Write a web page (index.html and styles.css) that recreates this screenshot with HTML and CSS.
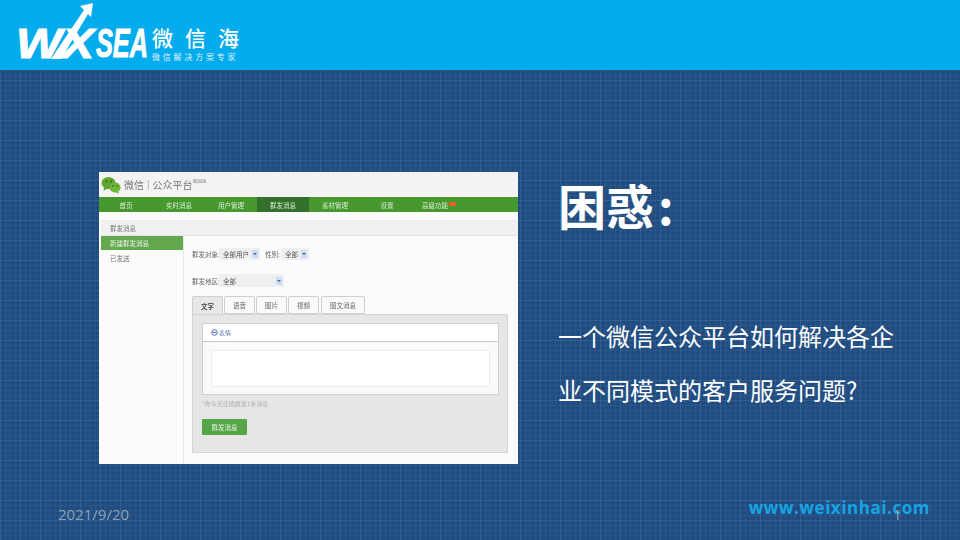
FILE: index.html
```html
<!DOCTYPE html>
<html lang="zh-CN">
<head>
<meta charset="utf-8">
<title>困惑</title>
<link rel="stylesheet" href="styles.css">
</head>
<body>
<div class="slide">
  <header class="header">
    <svg class="logo-mark" width="135" height="70" viewBox="0 0 135 70">
      <text class="mark-wx" x="1" y="58" textLength="78" lengthAdjust="spacingAndGlyphs">WX</text>
      <text class="mark-sea" x="81" y="57" textLength="52" lengthAdjust="spacingAndGlyphs">SEA</text>
      <polygon fill="#fff" points="78,3 65,6 69,10 36,59 46,59 73,14 76,17"/>
    </svg>
    <div class="brand">
      <div class="brand-name">微信海</div>
      <div class="brand-sub">微信解决方案专家</div>
    </div>
  </header>

  <main class="main">
    <section class="shot">
      <div class="shot-top">
        <svg width="20" height="18" viewBox="0 0 20 18">
          <ellipse cx="7.5" cy="7" rx="7" ry="6" fill="#5fa62f"/>
          <polygon points="3,11 2.5,15 7,12" fill="#5fa62f"/>
          <ellipse cx="14" cy="11.5" rx="5.6" ry="5" fill="#6fb53a"/>
          <polygon points="17,15 18,17.6 14,16" fill="#6fb53a"/>
          <circle cx="5" cy="5.5" r="1" fill="#2f6a16"/>
          <circle cx="10" cy="5.5" r="1" fill="#2f6a16"/>
          <circle cx="12" cy="10" r=".8" fill="#2f6a16"/>
          <circle cx="16" cy="10" r=".8" fill="#2f6a16"/>
        </svg>
        <span class="shot-brand">微信</span>
        <span class="shot-sep">|</span>
        <span class="shot-brand">公众平台</span>
        <span class="shot-badge">BETA</span>
      </div>
      <nav class="nav">
        <span class="nav-item nav-first">首页</span>
        <span class="nav-item">实时消息</span>
        <span class="nav-item">用户管理</span>
        <span class="nav-item nav-active">群发消息</span>
        <span class="nav-item">素材管理</span>
        <span class="nav-item">设置</span>
        <span class="nav-item">高级功能<i class="nav-new"></i></span>
      </nav>
      <div class="panel">
        <div class="panel-title">群发消息</div>
        <div class="panel-body">
          <aside class="side">
            <div class="side-item side-active">新建群发消息</div>
            <div class="side-item">已发送</div>
          </aside>
          <div class="content">
            <div class="form-row row-first">
              <span class="label">群发对象:</span>
              <span class="select sel-user">全部用户<i class="sel-arrow"></i></span>
              <span class="label label-gender">性别:</span>
              <span class="select sel-gender">全部<i class="sel-arrow"></i></span>
            </div>
            <div class="form-row row-second">
              <span class="label">群发地区:</span>
              <span class="select sel-area">全部<i class="sel-arrow"></i></span>
            </div>
            <div class="tabs">
              <span class="tab tab-active">文字</span>
              <span class="tab">语音</span>
              <span class="tab">图片</span>
              <span class="tab">视频</span>
              <span class="tab tab-wide">图文消息</span>
            </div>
            <div class="tab-panel">
              <div class="editor">
                <div class="editor-bar">
                  <svg width="7" height="7" viewBox="0 0 7 7"><circle cx="3.5" cy="3.5" r="2.8" fill="none" stroke="#4a6fb5" stroke-width="1"/><path d="M1.6 3.5h3.8" stroke="#4a6fb5" stroke-width=".9"/></svg>
                  <span>表情</span>
                </div>
                <div class="editor-body"><div class="textarea"></div></div>
              </div>
              <div class="hint">*你今天还能群发1条消息</div>
              <div class="send">群发消息</div>
            </div>
          </div>
        </div>
      </div>
    </section>
    <section class="copy">
      <h1 class="title">困惑<span class="title-colon">:</span></h1>
      <p class="desc">一个微信公众平台如何解决各企业不同模式的客户服务问题?</p>
    </section>
  </main>

  <footer class="footer">
    <span class="date">2021/9/20</span>
    <span class="site">www.weixinhai.com</span>
    <span class="page-no">1</span>
  </footer>
</div>
</body>
</html>
```

FILE: styles.css
```css
* { box-sizing: border-box; }
html, body { margin: 0; padding: 0; }
body { font-family: "Noto Sans CJK SC", "Liberation Sans", sans-serif; }

.slide {
  width: 960px;
  height: 540px;
  overflow: hidden;
  display: flex;
  flex-direction: column;
  background-color: #204c80;
  background-image:
    linear-gradient(to right, rgba(120,160,205,.12) 1px, transparent 1px),
    linear-gradient(to bottom, rgba(120,160,205,.12) 1px, transparent 1px),
    linear-gradient(to right, rgba(120,160,205,.1) 1px, transparent 1px),
    linear-gradient(to bottom, rgba(120,160,205,.1) 1px, transparent 1px);
  background-size: 20px 20px, 20px 20px, 5px 5px, 5px 5px;
}

/* header */
.header {
  height: 70px;
  flex: none;
  background: #05aced;
  display: flex;
  align-items: flex-start;
  padding: 0 0 0 15px;
}
.logo-mark { flex: none; overflow: visible; }
.mark-wx, .mark-sea {
  font-family: "Liberation Sans", sans-serif;
  font-weight: 700;
  font-style: italic;
  fill: #fff;
  stroke: #fff;
  stroke-width: 1px;
}
.mark-wx { font-size: 42px; }
.mark-sea { font-size: 41px; }
.brand { color: #fff; padding: 24px 0 0 2px; }
.brand-name {
  font-size: 21px;
  line-height: 27px;
  letter-spacing: 12px;
  font-weight: 500;
  white-space: nowrap;
}
.brand-sub {
  font-size: 8px;
  line-height: 11px;
  letter-spacing: 2.8px;
  white-space: nowrap;
  color: #dff4fd;
}

/* main */
.main {
  flex: 1;
  display: flex;
  align-items: flex-start;
  padding: 102px 0 0 99px;
}

/* screenshot */
.shot {
  width: 419px;
  height: 292px;
  flex: none;
  background: #fbfbfb;
  display: flex;
  flex-direction: column;
  font-size: 6.5px;
  line-height: 8px;
  color: #777;
  filter: blur(.4px);
}
.shot-top {
  height: 25px;
  flex: none;
  background: #f3f3f3;
  display: flex;
  align-items: center;
  padding-left: 2px;
  gap: 3px;
}
.shot-brand { font-size: 10px; color: #777; line-height: 14px; }
.shot-sep { font-size: 9px; color: #999; line-height: 14px; }
.shot-badge {
  font-size: 3.5px;
  line-height: 4px;
  width: 13px;
  text-align: center;
  margin: -7px 0 0 -2px;
  background: #bbb;
  color: #eee;
}
.nav {
  height: 15px;
  flex: none;
  display: flex;
  background: #46982f;
  color: #d8ecd0;
}
.nav-item {
  width: 52px;
  display: flex;
  align-items: center;
  justify-content: center;
}
.nav-first { width: 54px; }
.nav-active { background: #33702b; }
.nav-new {
  width: 7px;
  height: 4px;
  margin: -2px 0 0 1px;
  border-radius: 1px;
  background: #e8622a;
}
.panel {
  flex: 1;
  margin: 8px 0 0 2px;
  display: flex;
  flex-direction: column;
  min-height: 0;
}
.panel-title {
  height: 16px;
  flex: none;
  padding: 0 0 0 9px;
  display: flex;
  align-items: center;
  background: #f1f1f1;
  border-top: 1px solid #ececec;
  border-bottom: 1px solid #e2e2e2;
}
.panel-body { flex: 1; display: flex; min-height: 0; }
.side {
  width: 83px;
  flex: none;
  border-right: 1px solid #e6e6e6;
  display: flex;
  flex-direction: column;
}
.side-item {
  height: 14px;
  display: flex;
  align-items: center;
  padding-left: 9px;
  margin-bottom: 1px;
}
.side-active { background: #62a84e; color: #e6f3e0; }
.content { flex: 1; padding: 12px 10px 10px 8px; }
.form-row { display: flex; align-items: center; height: 12px; }
.row-second { margin-top: 14px; height: 13px; }
.label { width: 27px; flex: none; white-space: nowrap; color: #666; }
.label-gender { width: 16px; margin-left: 5px; }
.select {
  height: 100%;
  display: flex;
  align-items: center;
  justify-content: space-between;
  padding: 0 2px 0 4px;
  background: #efefef;
  color: #555;
  white-space: nowrap;
}
.sel-user { width: 41px; }
.sel-gender { width: 28px; }
.sel-area { width: 65px; }
.sel-arrow {
  width: 6px;
  height: 8px;
  background: #cfdcf5;
  position: relative;
}
.sel-arrow::after {
  content: "";
  position: absolute;
  left: 1px;
  top: 3px;
  border: 2px solid transparent;
  border-top: 2px solid #3f5f9f;
}
.tabs { display: flex; gap: 1px; margin-top: 9px; height: 18px; }
.tab {
  width: 31px;
  height: 18px;
  display: flex;
  align-items: center;
  justify-content: center;
  background: #fafafa;
  border: 1px solid #cfcfcf;
  border-radius: 2px 2px 0 0;
  color: #666;
}
.tab-active {
  background: #e8e8e8;
  border-bottom: none;
  font-weight: 700;
  color: #444;
}
.tab-wide { width: 44px; margin-left: 1px; }
.tab-panel {
  height: 139px;
  background: #e6e6e6;
  border: 1px solid #d4d4d4;
  padding: 8px 8px 0 9px;
}
.editor { height: 72px; display: flex; flex-direction: column; border: 1px solid #cfcfcf; background: #f9f9f9; }
.editor-bar {
  height: 18px;
  flex: none;
  background: #fff;
  border-bottom: 1px solid #c6c6c6;
  display: flex;
  align-items: center;
  gap: 1px;
  padding-left: 8px;
  color: #5472b0;
  font-size: 6px;
}
.editor-body { flex: 1; padding: 8px 8px 7px 8px; }
.textarea { height: 100%; background: #fff; border: 1px solid #ececec; }
.hint { margin-top: 5px; color: #b0b0b0; font-size: 6px; line-height: 8px; white-space: nowrap; }
.send {
  width: 45px;
  height: 16px;
  margin-top: 11px;
  display: flex;
  align-items: center;
  justify-content: center;
  background: #56a546;
  border-radius: 1px;
  color: #e9f5e5;
}

/* right copy */
.copy { width: 340px; margin-left: 40px; color: #fff; }
.title {
  margin: 0;
  font-size: 48px;
  line-height: 64px;
  font-weight: 700;
  white-space: nowrap;
}
.title-colon { margin-left: 4px; }
.desc {
  margin: 73px 0 0;
  font-size: 24px;
  line-height: 54px;
  font-weight: 400;
  width: 338px;
}

/* footer */
.footer {
  position: relative;
  height: 50px;
  flex: none;
  display: flex;
  justify-content: space-between;
  padding: 0 30px 0 58px;
}
.date {
  margin-top: 14px;
  font-family: "Open Sans", sans-serif;
  font-size: 15px;
  line-height: 20px;
  color: #8ea2ba;
}
.site {
  margin-top: 6px;
  font-family: "Open Sans", sans-serif;
  font-weight: 700;
  font-size: 17px;
  line-height: 24px;
  letter-spacing: .55px;
  color: #15a4e4;
}
.page-no {
  position: absolute;
  left: 893px;
  top: 14px;
  font-family: "Open Sans", sans-serif;
  font-size: 15px;
  line-height: 20px;
  color: #8ea2ba;
}
```
